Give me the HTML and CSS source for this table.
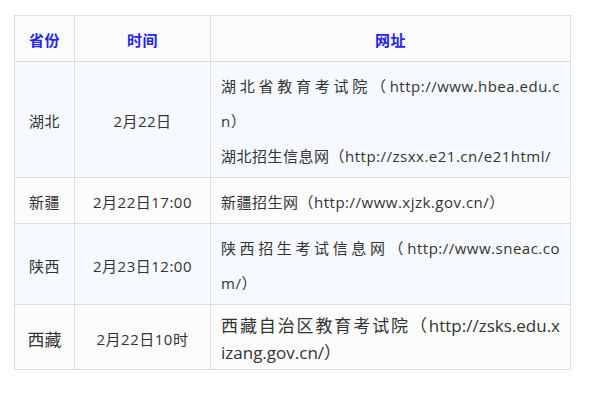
FILE: index.html
```html
<!DOCTYPE html>
<html lang="zh-CN">
<head>
<meta charset="utf-8">
<title>网址</title>
<link rel="stylesheet" href="styles.css">
</head>
<body>
<div class="page">
  <table class="tbl">
    <colgroup>
      <col class="c-prov">
      <col class="c-time">
      <col class="c-site">
    </colgroup>
    <thead>
      <tr class="head">
        <th>省份</th>
        <th>时间</th>
        <th>网址</th>
      </tr>
    </thead>
    <tbody>
      <tr class="alt">
        <td class="prov">湖北</td>
        <td class="time">2月22日</td>
        <td class="site">
          <p><span class="jl">湖北省教育考试院（http://www.hbea.edu.c</span>n）</p>
          <p>湖北招生信息网（http://zsxx.e21.cn/e21html/</p>
        </td>
      </tr>
      <tr class="plain">
        <td class="prov">新疆</td>
        <td class="time">2月22日17:00</td>
        <td class="site"><p>新疆招生网（http://www.xjzk.gov.cn/）</p></td>
      </tr>
      <tr class="alt">
        <td class="prov">陕西</td>
        <td class="time">2月23日12:00</td>
        <td class="site"><p><span class="jl">陕西招生考试信息网（http://www.sneac.co</span>m/）</p></td>
      </tr>
      <tr class="plain big">
        <td class="prov">西藏</td>
        <td class="time">2月22日10时</td>
        <td class="site"><p><span class="jl">西藏自治区教育考试院（http://zsks.edu.x</span>izang.gov.cn/）</p></td>
      </tr>
    </tbody>
  </table>
</div>
</body>
</html>
```

FILE: styles.css
```css
html, body {
  margin: 0;
  padding: 0;
  background: #ffffff;
}

.page {
  padding: 15px 14px;
}

.tbl {
  width: 556px;
  table-layout: fixed;
  border-collapse: collapse;
  font-family: "Open Sans", "Noto Sans CJK SC", sans-serif;
  font-size: 15px;
  letter-spacing: 0.5px;
  color: #333333;
  line-height: 35px;
}

.c-prov { width: 60px; }
.c-time { width: 136px; }
.c-site { width: 360px; }

.tbl th,
.tbl td {
  border: 1px solid #dddddd;
  padding: 7px 10px 3px;
  vertical-align: middle;
}

.tbl th {
  font-weight: bold;
  color: #2323ea;
  text-align: center;
  background: #fbfbfb;
}

.prov,
.time {
  text-align: center;
}

.alt td {
  background: #f6f9ff;
}

.plain td {
  background: #fcfcfc;
}

.site p {
  margin: 0;
  text-align: left;
}

.jl {
  display: block;
  white-space: nowrap;
  text-align: justify;
  text-align-last: justify;
}

.big .prov,
.big .site {
  font-size: 17px;
  line-height: 27px;
  letter-spacing: 0;
}
```
